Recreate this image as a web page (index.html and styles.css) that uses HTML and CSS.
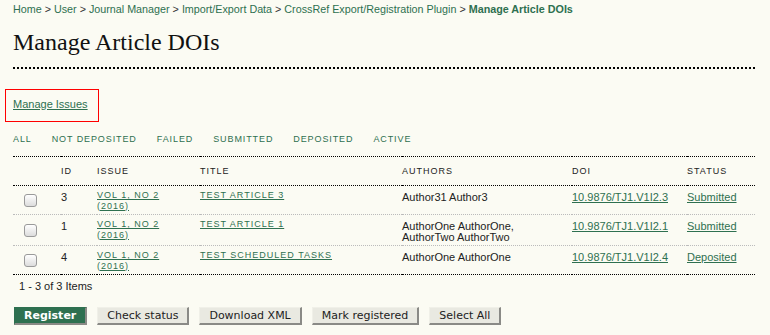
FILE: index.html
```html
<!DOCTYPE html>
<html>
<head>
<meta charset="utf-8">
<link rel="stylesheet" href="styles.css">
</head>
<body>
<div class="page">
  <div class="breadcrumb">
    <a href="#">Home</a> &gt; <a href="#">User</a> &gt; <a href="#">Journal Manager</a> &gt; <a href="#">Import/Export Data</a> &gt; <a href="#">CrossRef Export/Registration Plugin</a> &gt; <a href="#" class="current">Manage Article DOIs</a>
  </div>
  <h2 class="title">Manage Article DOIs</h2>

  <div class="manage-box"><a href="#">Manage Issues</a></div>

  <ul class="filter">
    <li><a href="#">All</a></li>
    <li><a href="#">Not deposited</a></li>
    <li><a href="#">Failed</a></li>
    <li><a href="#">Submitted</a></li>
    <li><a href="#">Deposited</a></li>
    <li><a href="#">Active</a></li>
  </ul>

  <table class="listing">
    <colgroup>
      <col class="c-check"><col class="c-id"><col class="c-issue"><col class="c-title"><col class="c-authors"><col class="c-doi"><col class="c-status">
    </colgroup>
    <thead>
      <tr class="heading">
        <td></td><td>ID</td><td>Issue</td><td>Title</td><td>Authors</td><td>DOI</td><td>Status</td>
      </tr>
    </thead>
    <tbody>
      <tr>
        <td class="check"><input type="checkbox"></td>
        <td>3</td>
        <td class="caps issue"><a href="#">Vol 1, No 2 (2016)</a></td>
        <td class="caps"><a href="#">Test Article 3</a></td>
        <td>Author31 Author3</td>
        <td><a href="#">10.9876/TJ1.V1I2.3</a></td>
        <td><a href="#">Submitted</a></td>
      </tr>
      <tr>
        <td class="check"><input type="checkbox"></td>
        <td>1</td>
        <td class="caps issue"><a href="#">Vol 1, No 2 (2016)</a></td>
        <td class="caps"><a href="#">Test Article 1</a></td>
        <td>AuthorOne AuthorOne,<br>AuthorTwo AuthorTwo</td>
        <td><a href="#">10.9876/TJ1.V1I2.1</a></td>
        <td><a href="#">Submitted</a></td>
      </tr>
      <tr class="last">
        <td class="check"><input type="checkbox"></td>
        <td>4</td>
        <td class="caps issue"><a href="#">Vol 1, No 2 (2016)</a></td>
        <td class="caps"><a href="#">Test Scheduled Tasks</a></td>
        <td>AuthorOne AuthorOne</td>
        <td><a href="#">10.9876/TJ1.V1I2.4</a></td>
        <td><a href="#">Deposited</a></td>
      </tr>
    </tbody>
  </table>
  <div class="items">1 - 3 of 3 Items</div>

  <div class="actions">
    <button class="btn primary">Register</button>
    <button class="btn">Check status</button>
    <button class="btn">Download XML</button>
    <button class="btn">Mark registered</button>
    <button class="btn">Select All</button>
  </div>
</div>
</body>
</html>
```
FILE: styles.css
```css
html, body {
  margin: 0;
  padding: 0;
  background: #fbfbf3;
}
body {
  font-family: "Liberation Sans", Arial, sans-serif;
  font-size: 11px;
  color: #222;
}
a {
  color: #2e7050;
}
.page {
  padding: 0 15px 0 13px;
}
.breadcrumb {
  padding-top: 3px;
  font-size: 10.75px;
  line-height: 13px;
  color: #333;
}
.breadcrumb a {
  text-decoration: none;
}
.breadcrumb a.current {
  font-weight: bold;
}
.title {
  margin: 11px 0 0;
  font-family: "Liberation Serif", "Times New Roman", serif;
  font-weight: normal;
  font-size: 24px;
  line-height: 30px;
  color: #111;
  padding-bottom: 10px;
  border-bottom: 2px dotted #000;
}
.manage-box {
  margin: 20px 0 0 -8px;
  width: 94px;
  height: 33px;
  box-sizing: border-box;
  border: 1px solid #f00;
  padding: 8px 0 0 7px;
  line-height: 13px;
}
.filter {
  list-style: none;
  margin: 12px 0 0;
  padding: 0;
  display: flex;
  gap: 20px;
}
.filter li {
  font-size: 9px;
  line-height: 11px;
  letter-spacing: 0.9px;
  text-transform: uppercase;
}
.filter a {
  text-decoration: none;
}
.listing {
  margin-top: 11px;
  width: 742px;
  table-layout: fixed;
  border-collapse: collapse;
  border-top: 1px dotted #000;
}
.c-check { width: 48px; }
.c-id { width: 36px; }
.c-issue { width: 103px; }
.c-title { width: 202px; }
.c-authors { width: 170px; }
.c-doi { width: 115px; }
.c-status { width: 68px; }
.listing td {
  padding: 6px 0 2px;
  vertical-align: top;
  line-height: 11px;
}
.listing tr.heading td {
  height: 28px;
  padding: 0;
  vertical-align: middle;
  font-size: 9px;
  letter-spacing: 1px;
  text-transform: uppercase;
  border-bottom: 1px dotted #000;
}
.listing tbody tr td {
  border-bottom: 1px dotted #bbb;
}
.listing tbody tr.last td {
  border-bottom: 1px dotted #000;
}
.listing td.caps {
  font-size: 9px;
  line-height: 10.5px;
  letter-spacing: 1px;
  text-transform: uppercase;
  padding-top: 4px;
  padding-bottom: 3px;
}
.listing td.issue {
  padding-right: 30px;
}
.listing td.check {
  vertical-align: middle;
  padding: 0 0 0 11px;
}
.check input {
  appearance: none;
  -webkit-appearance: none;
  display: block;
  margin: 0;
  width: 13px;
  height: 13px;
  box-sizing: border-box;
  border: 1px solid #9a9a9a;
  border-radius: 3px;
  background: linear-gradient(#ffffff, #dcdcdc);
}
.items {
  margin-top: 5px;
  padding-left: 6px;
  line-height: 13px;
}
.actions {
  margin-top: 14px;
  display: flex;
  gap: 10px;
  padding-left: 1px;
}
.btn {
  font-family: "DejaVu Sans", Verdana, sans-serif;
  font-size: 11px;
  line-height: 13px;
  padding: 1px 9px;
  margin: 0;
  color: #222;
  background: #e9e9e1;
  border-style: solid;
  border-width: 1px 2px 2px 1px;
  border-color: #f0f0e8 #8a8a86 #8a8a86 #f0f0e8;
  border-radius: 0;
}
.btn.primary {
  background: #2e7050;
  color: #fff;
  font-weight: bold;
  border-color: #2e7050 #8a8a86 #8a8a86 #2e7050;
}
```
